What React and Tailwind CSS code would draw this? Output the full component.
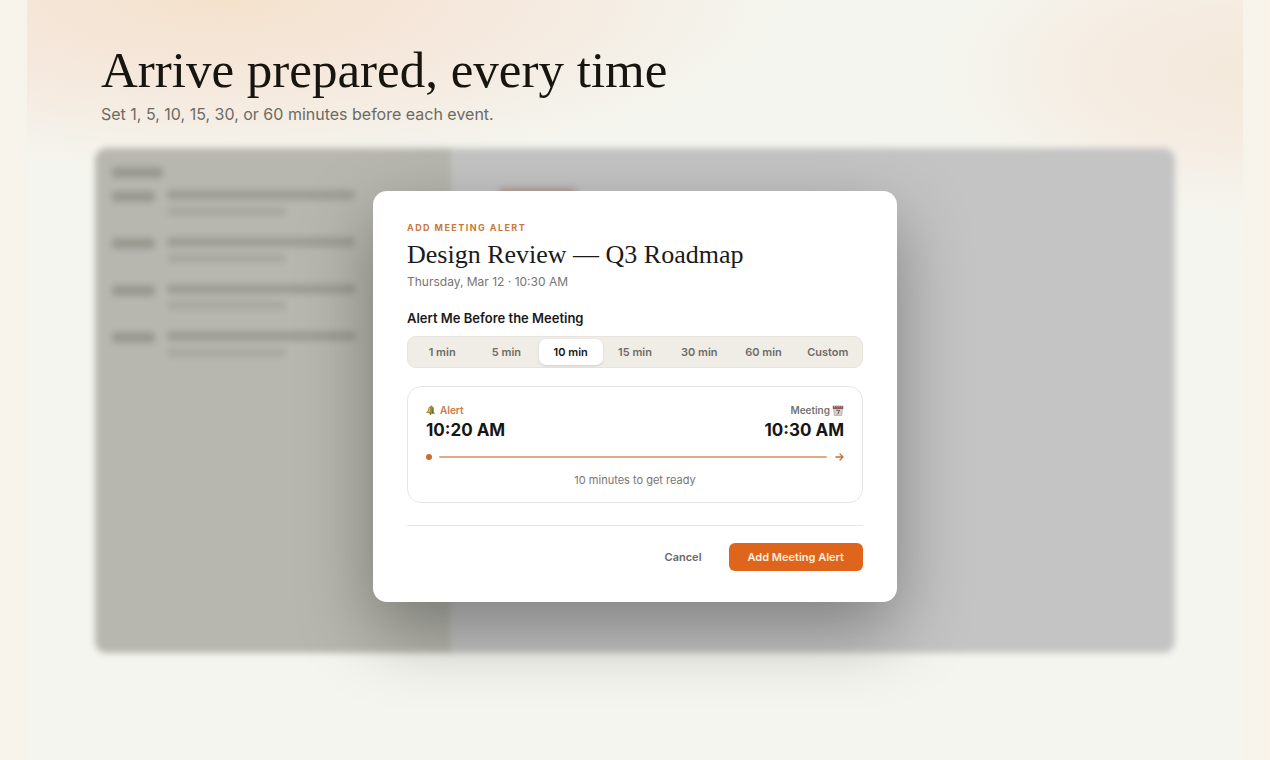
import { useState } from "react";

const options = ["1 min", "5 min", "10 min", "15 min", "30 min", "60 min", "Custom"];

function BellIcon() {
  return (
    <svg className="size-[10px]" viewBox="0 0 20 20" aria-hidden="true">
      <g transform="rotate(8 10 10)">
        <circle cx="10" cy="17.500" r="2.200" fill="#6b5a24" />
        <path d="M10 1c-1.200 0-1.800.8-1.800 1.800C5.400 3.600 4.200 6 4.200 9c0 3.500-1 5.200-3 6.700V17h17.600v-1.300c-2-1.500-3-3.200-3-6.700 0-3-1.200-5.400-4-6.200C11.800 1.800 11.200 1 10 1z" fill="#a08a35" />
        <path d="M7.500 5c-1.400 1.300-1.500 4-1.700 6.500L4.500 15h3.700z" fill="#d8c878" />
        <path d="M12.500 4.500c1.600 2 1 5.500 2.500 9.500l1.500 2h-4z" fill="#5f6b2c" />
      </g>
    </svg>
  );
}

function CalendarIcon() {
  return (
    <svg className="h-[11px] w-3" viewBox="0 0 24 22" aria-hidden="true">
      <path d="M3 7h18l-1.500 14h-15z" fill="#d5cfcd" stroke="#9a8b89" strokeWidth="1" />
      <path d="M1.500 1.500h21V8h-21z" fill="#8b5f5e" />
      <path d="M5 1v3.500M9.600 1v3.500M14.300 1v3.500M19 1v3.500" stroke="#d9c9c8" strokeWidth="1.400" />
      <path d="M8.500 10.500h6.500l-3.500 8" fill="none" stroke="#6e5553" strokeWidth="2" />
    </svg>
  );
}

function SkeletonRow() {
  return (
    <div className="flex gap-3">
      <div className="mt-px h-[11px] w-[43px] rounded-sm bg-[#999990]" />
      <div className="grow">
        <div className="h-[10px] rounded-sm bg-[#9e9e96]" />
        <div className="mt-[7px] h-[9px] w-[119px] rounded-sm bg-[#a9a9a0]" />
      </div>
    </div>
  );
}

function Backdrop() {
  return (
    <div aria-hidden="true" className="col-start-1 row-start-1 flex overflow-hidden rounded-xl bg-[#c4c4c4] blur-[3px]">
      <div className="w-[33%] bg-[#b7b7af] pt-[19px] pr-24 pl-[17px]">
        <div className="h-[11px] w-[51px] rounded-sm bg-[#999990]" />
        <div className="mt-3 flex flex-col gap-[21px]">
          <SkeletonRow />
          <SkeletonRow />
          <SkeletonRow />
          <SkeletonRow />
        </div>
      </div>
      <div className="grow pt-10 pl-12">
        <div className="h-4 w-[78px] rounded-sm bg-[#b39f95]" />
      </div>
    </div>
  );
}

function Timeline() {
  return (
    <section className="mt-[18px] rounded-[14px] border border-[#e6e6e4] px-[18px] pt-4 pb-[14px]">
      <div className="flex justify-between">
        <div>
          <p className="flex items-center gap-1 text-[10px] leading-[14px] font-semibold text-[#c87a45]">
            <BellIcon />
            Alert
          </p>
          <p className="mt-px text-[17px] leading-6 font-bold text-[#161616]">10:20 AM</p>
        </div>
        <div className="flex flex-col items-end">
          <p className="flex items-center gap-0.5 text-[10px] leading-[14px] font-semibold text-[#777472]">
            Meeting
            <CalendarIcon />
          </p>
          <p className="mt-px text-[17px] leading-6 font-bold text-[#161616]">10:30 AM</p>
        </div>
      </div>
      <div className="mt-[11px] flex h-2 items-center">
        <span className="size-[6px] rounded-full bg-[#cf6a33]" />
        <span className="ml-[7px] h-0.5 grow rounded-full bg-[#e0ac88]" />
        <svg className="ml-2 h-2 w-[9px]" viewBox="0 0 9 8" fill="none" stroke="#c4703f" strokeWidth="1.300" strokeLinecap="round" strokeLinejoin="round" aria-hidden="true">
          <path d="M.8 4h7.200M5 1l3 3-3 3" />
        </svg>
      </div>
      <p className="mt-[11px] text-center text-[11px] leading-4 text-[#777472]">10 minutes to get ready</p>
    </section>
  );
}

function AlertDialog() {
  const [selected, setSelected] = useState("10 min");
  return (
    <div className="relative col-start-1 row-start-1 flex justify-center pt-[43px] pb-[51px]">
      <form
        role="dialog"
        aria-labelledby="meeting-title"
        onSubmit={(e) => e.preventDefault()}
        className="w-full max-w-[524px] rounded-[14px] bg-white px-[34px] pt-[30px] pb-[31px] shadow-[0_28px_72px_rgba(0,0,0,0.35)]"
      >
        <p className="text-[9px] leading-[14px] font-bold tracking-[0.16em] text-[#c8783f] uppercase">Add meeting alert</p>
        <h2 id="meeting-title" className="mt-1 font-['Georgia','Liberation_Serif',serif] text-[26px] leading-8 text-[#1b1a19]">
          Design Review — Q3 Roadmap
        </h2>
        <p className="mt-0.5 text-[12px] leading-[18px] text-[#777472]">Thursday, Mar 12 · 10:30 AM</p>
        <fieldset>
          <legend className="pt-[17px] text-[13px] leading-5 font-semibold text-[#1b1a19]">Alert Me Before the Meeting</legend>
          <div className="mt-2 grid h-8 grid-cols-7 rounded-[9px] border border-[#e6e4dc] bg-[#efede6] p-[2px]">
            {options.map((option) => (
              <label
                key={option}
                className="flex items-center justify-center rounded-[7px] text-[11px] leading-4 font-semibold whitespace-nowrap text-[#6f6c66] has-checked:bg-white has-checked:text-[#161616] has-checked:shadow-sm"
              >
                <input
                  type="radio"
                  name="lead-time"
                  value={option}
                  checked={selected === option}
                  onChange={() => setSelected(option)}
                  className="sr-only"
                />
                {option}
              </label>
            ))}
          </div>
        </fieldset>
        <Timeline />
        <div className="mt-[22px] flex items-center justify-end gap-2 border-t border-[#e6e6e4] pt-[17px]">
          <button type="button" className="h-7 rounded-md px-[19px] text-[11px] font-semibold text-[#6b6966]">
            Cancel
          </button>
          <button type="submit" className="h-7 rounded-md bg-[#e0651c] px-[19px] text-[11px] font-semibold text-[#fdeedd]">
            Add Meeting Alert
          </button>
        </div>
      </form>
    </div>
  );
}

export default function App() {
  return (
    <div className="min-h-screen bg-[linear-gradient(to_right,#f9f3ea,#f6f4ea_27px,#f6f4ea_calc(100%-27px),#f9f3ea)] px-[27px] font-['Inter','Liberation_Sans',sans-serif]">
      <main className="min-h-screen bg-[#f4f5ee] bg-[radial-gradient(ellipse_560px_170px_at_190px_0px,#f4e2cc_0%,#f5e6d9_35%,#f5ece2_65%,#f4f5ee00_100%),radial-gradient(ellipse_300px_145px_at_100%_70px,#f3eadc_0%,#f5ebe0_40%,#f5f0e7_70%,#f4f5ee00_100%)] px-[68px] pt-10">
        <header className="pl-[6px]">
          <h1 className="font-['Georgia','Liberation_Serif',serif] text-[51px] leading-[60px] text-[#16150f]">Arrive prepared, every time</h1>
          <p className="mt-0.5 text-[16px] leading-6 text-[#6d6a62]">Set 1, 5, 10, 15, 30, or 60 minutes before each event.</p>
        </header>
        <div className="mt-[22px] grid">
          <Backdrop />
          <AlertDialog />
        </div>
      </main>
    </div>
  );
}
